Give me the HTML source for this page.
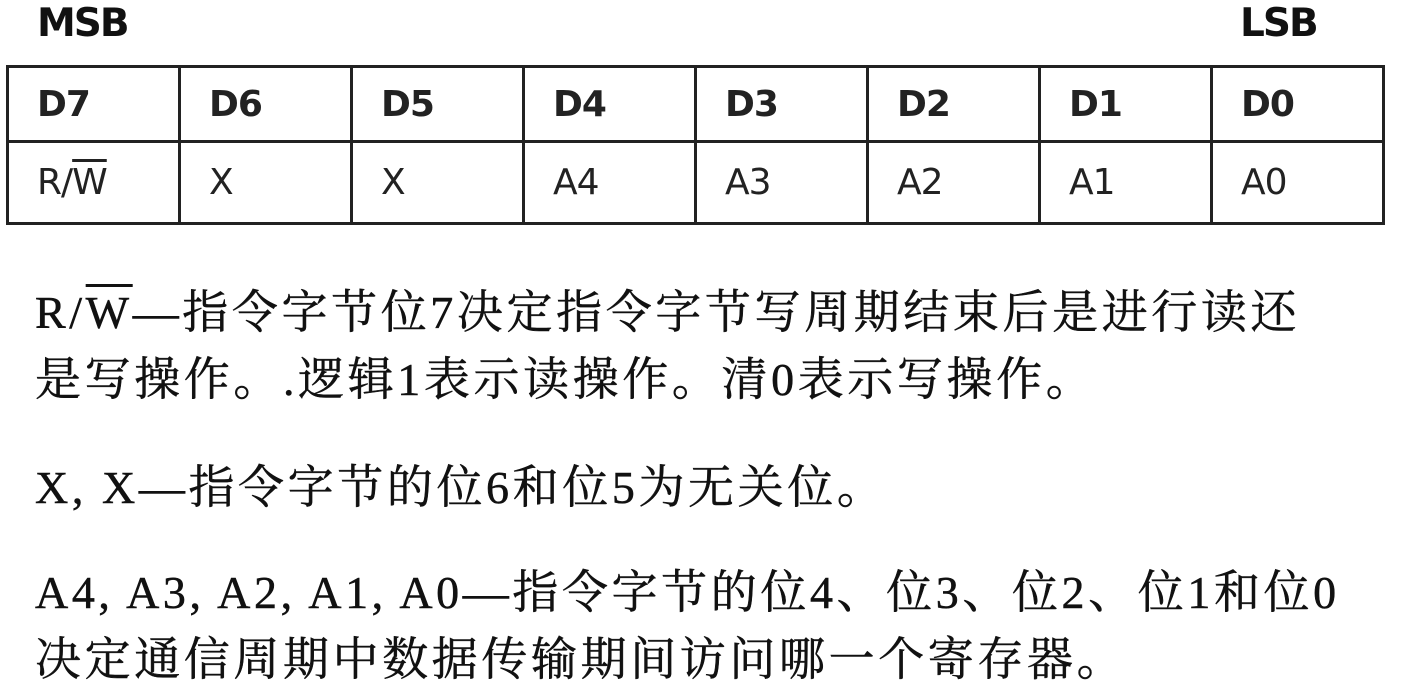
<!DOCTYPE html>
<html><head><meta charset="utf-8"><style>
body{margin:0;width:1401px;height:696px;background:#fff;position:relative;overflow:hidden;color:#111}
.h{position:absolute;font:bold 39px "DejaVu Sans","Liberation Sans",sans-serif;top:1px;letter-spacing:-2px}
table{position:absolute;left:6px;top:65px;border-collapse:collapse;table-layout:fixed}
td{border:3px solid #222;padding:0 0 0 28px;box-sizing:border-box;width:172px;font-family:"DejaVu Sans","Liberation Sans",sans-serif;color:#222}
tr.a td{height:75px;font-weight:bold;font-size:36px;letter-spacing:-1px}
tr.b td{height:82px;font-size:36px;letter-spacing:-1px}
.ov{text-decoration:overline;text-decoration-thickness:3px}
.l{position:absolute;left:35px;white-space:nowrap;font-family:"Liberation Serif","Noto Serif CJK SC",serif;font-size:46px;line-height:50px;letter-spacing:3.6px;-webkit-text-stroke:0.5px #111}
</style></head><body>
<div class="h" style="left:37px">MSB</div>
<div class="h" style="left:1240px">LSB</div>
<table>
<tr class="a"><td>D7</td><td>D6</td><td>D5</td><td>D4</td><td>D3</td><td>D2</td><td>D1</td><td>D0</td></tr>
<tr class="b"><td>R/<span class="ov">W</span></td><td>X</td><td>X</td><td>A4</td><td>A3</td><td>A2</td><td>A1</td><td>A0</td></tr>
</table>
<div class="l" style="top:288px">R/<span class="ov">W</span>—指令字节位7决定指令字节写周期结束后是进行读还</div>
<div class="l" style="top:355px">是写操作。.逻辑1表示读操作。清0表示写操作。</div>
<div class="l" style="top:463px">X, X—指令字节的位6和位5为无关位。</div>
<div class="l" style="top:568px">A4, A3, A2, A1, A0—指令字节的位4、位3、位2、位1和位0</div>
<div class="l" style="top:635px">决定通信周期中数据传输期间访问哪一个寄存器。</div>
</body></html>
